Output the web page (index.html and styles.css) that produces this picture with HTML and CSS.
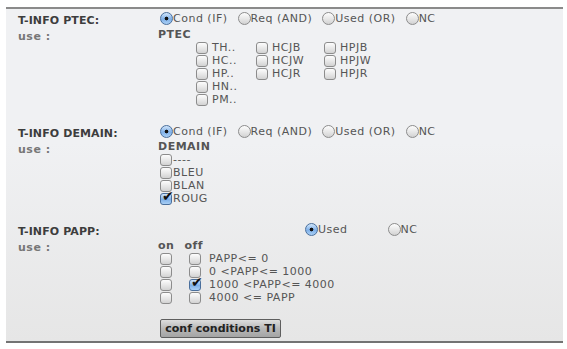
FILE: index.html
```html
<!DOCTYPE html>
<html lang="fr">
<head>
  <meta charset="UTF-8">
  <title>Conditions TI</title>
  <link rel="stylesheet" href="styles.css">
</head>
<body>
  <form class="panel" onsubmit="return false;">

    <div class="section">
      <div class="head">
        <div class="label">T-INFO PTEC:</div>
        <div class="radios">
          <label class="opt"><input type="radio" name="ptec" checked>Cond (IF)</label>
          <label class="opt"><input type="radio" name="ptec">Req (AND)</label>
          <label class="opt"><input type="radio" name="ptec">Used (OR)</label>
          <label class="opt"><input type="radio" name="ptec">NC</label>
        </div>
      </div>
      <div class="use">
        <div class="label sub">use :</div>
        <div class="values">
          <div class="title">PTEC</div>
          <div class="ptec-grid">
            <div class="col">
              <label class="chk"><input type="checkbox">TH..</label>
              <label class="chk"><input type="checkbox">HC..</label>
              <label class="chk"><input type="checkbox">HP..</label>
              <label class="chk"><input type="checkbox">HN..</label>
              <label class="chk"><input type="checkbox">PM..</label>
            </div>
            <div class="col">
              <label class="chk"><input type="checkbox">HCJB</label>
              <label class="chk"><input type="checkbox">HCJW</label>
              <label class="chk"><input type="checkbox">HCJR</label>
            </div>
            <div class="col">
              <label class="chk"><input type="checkbox">HPJB</label>
              <label class="chk"><input type="checkbox">HPJW</label>
              <label class="chk"><input type="checkbox">HPJR</label>
            </div>
          </div>
        </div>
      </div>
    </div>

    <div class="section demain">
      <div class="head">
        <div class="label">T-INFO DEMAIN:</div>
        <div class="radios">
          <label class="opt"><input type="radio" name="demain" checked>Cond (IF)</label>
          <label class="opt"><input type="radio" name="demain">Req (AND)</label>
          <label class="opt"><input type="radio" name="demain">Used (OR)</label>
          <label class="opt"><input type="radio" name="demain">NC</label>
        </div>
      </div>
      <div class="use">
        <div class="label sub">use :</div>
        <div class="values">
          <div class="title">DEMAIN</div>
          <div class="list">
            <label class="chk tight"><input type="checkbox">----</label>
            <label class="chk tight"><input type="checkbox">BLEU</label>
            <label class="chk tight"><input type="checkbox">BLAN</label>
            <label class="chk tight"><input type="checkbox" checked>ROUG</label>
          </div>
        </div>
      </div>
    </div>

    <div class="section last">
      <div class="head">
        <div class="label">T-INFO PAPP:</div>
        <div class="radios papp">
          <label class="opt"><input type="radio" name="papp" checked>Used</label>
          <label class="opt"><input type="radio" name="papp">NC</label>
        </div>
      </div>
      <div class="use">
        <div class="label sub">use :</div>
        <div class="values">
          <div class="onoff"><span>on</span><span>off</span></div>
          <div class="papp-row"><input type="checkbox" class="on"><input type="checkbox" class="off"><span>PAPP&lt;= 0</span></div>
          <div class="papp-row"><input type="checkbox" class="on"><input type="checkbox" class="off"><span>0 &lt;PAPP&lt;= 1000</span></div>
          <div class="papp-row"><input type="checkbox" class="on"><input type="checkbox" class="off" checked><span>1000 &lt;PAPP&lt;= 4000</span></div>
          <div class="papp-row"><input type="checkbox" class="on"><input type="checkbox" class="off"><span>4000 &lt;= PAPP</span></div>
          <button type="button" class="conf">conf conditions TI</button>
        </div>
      </div>
    </div>

  </form>
</body>
</html>
```

FILE: styles.css
```css
/* aqua-like widgets */
input[type=radio],
input[type=checkbox] {
  appearance: none;
  -webkit-appearance: none;
  margin: 0;
  flex: none;
  position: relative;
  border: 1px solid #8c8c8c;
  background: linear-gradient(#fdfdfd, #e4e4e4 60%, #d2d2d2);
}

input[type=radio] {
  width: 13px;
  height: 13px;
  border-radius: 50%;
}

input[type=radio]:checked {
  border-color: #4a6f9c;
  background: radial-gradient(circle, #111 0 1.6px, transparent 2.2px),
              linear-gradient(#d2e6fb, #7fb0e8 55%, #a9cff5);
}

input[type=checkbox] {
  width: 12px;
  height: 12px;
  border-radius: 3px;
}

input[type=checkbox]:checked {
  border-color: #4a6f9c;
  background: linear-gradient(#d2e6fb, #7fb0e8 55%, #a9cff5);
}

input[type=checkbox]:checked::after {
  content: "\2714";
  position: absolute;
  left: 1px;
  top: -6px;
  font-size: 14px;
  color: #111;
}

body {
  margin: 0;
  background: #fff;
  font-family: "DejaVu Sans", Verdana, sans-serif;
  font-size: 11px;
  letter-spacing: 0.5px;
  color: #555;
}

.panel {
  margin: 7px 4px 0 6px;
  height: 332px;
  padding: 0 0 0 12px;
  border-top: 2px solid #8a8a8a;
  border-bottom: 2px solid #737373;
  background: linear-gradient(#f0f1f3, #f0f1f3 40%, #e6e6e6);
}

.section {
  margin-bottom: 16px;
}

.section.demain {
  margin-bottom: 15px;
}

.head, .use {
  display: flex;
}

.head {
  height: 18px;
  align-items: center;
}

.label {
  width: 142px;
  flex: none;
  font-weight: bold;
  color: #3d3d3d;
  padding-top: 4px;
  letter-spacing: 0.1px;
}

.label.sub {
  color: #777;
  padding-top: 3px;
  letter-spacing: 0.5px;
}

.radios {
  display: flex;
  gap: 10px;
}

.radios.papp {
  margin-left: 145px;
  gap: 40px;
}

.opt {
  display: flex;
  align-items: center;
  color: #555;
}

.title {
  font-weight: bold;
  color: #555;
  line-height: 13px;
  margin-left: -2px;
  margin-top: 1px;
}

.ptec-grid {
  display: flex;
  margin-left: 36px;
}

.col {
  display: flex;
  flex-direction: column;
  width: 60px;
}

.col + .col {
  width: 68px;
}

.chk {
  display: flex;
  align-items: center;
  height: 13px;
  line-height: 13px;
  white-space: nowrap;
}

.chk input {
  margin-right: 4px;
}

.chk.tight input {
  margin-right: 1px;
}

.demain .title {
  margin-top: 0;
}

.onoff {
  display: flex;
  font-weight: bold;
  color: #555;
  line-height: 13px;
  margin-left: -2px;
  margin-top: 1px;
  gap: 10px;
}

.papp-row {
  display: flex;
  align-items: center;
  height: 13px;
}

.papp-row .on {
  margin-right: 17px;
}

.papp-row .off {
  margin-right: 8px;
}

.conf {
  display: block;
  margin-top: 15px;
  width: 121px;
  height: 19px;
  padding: 0;
  font-family: "DejaVu Sans", Verdana, sans-serif;
  font-size: 11px;
  font-weight: bold;
  color: #222;
  border: 1px solid #5e5e5e;
  border-radius: 2px;
  background: linear-gradient(#dedede, #b8b8b8 50%, #a4a4a4);
}
```
